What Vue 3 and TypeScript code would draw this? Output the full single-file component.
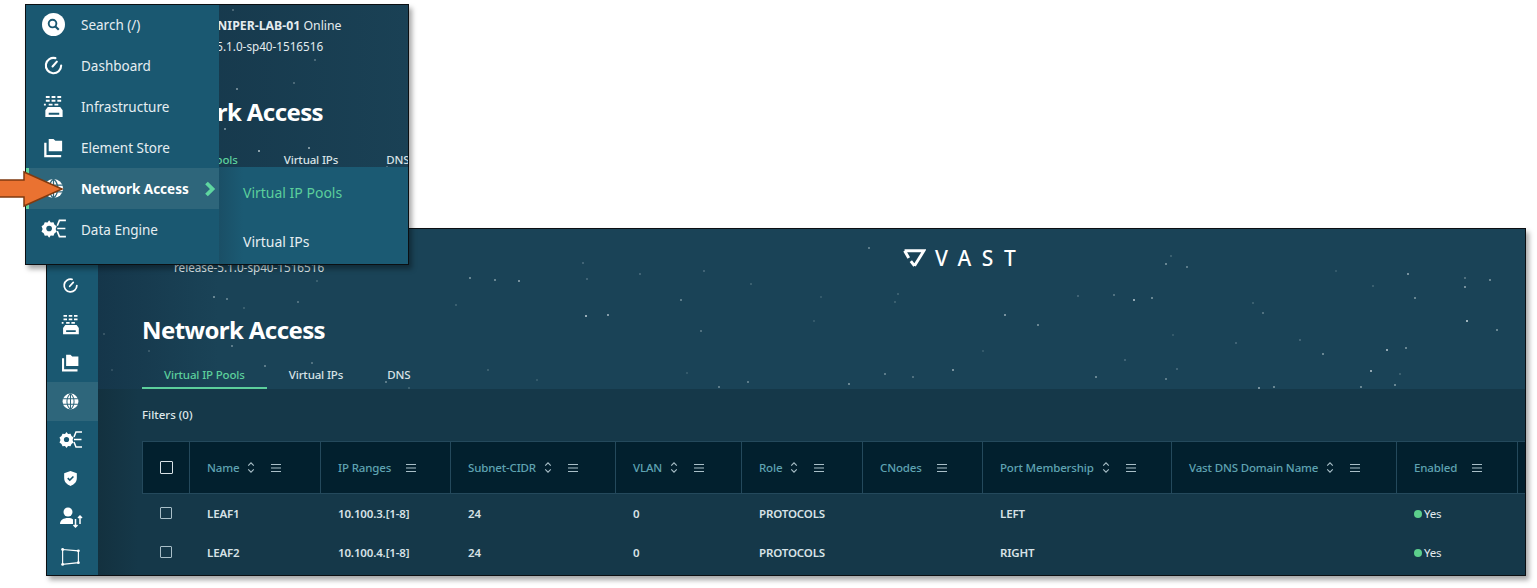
<script setup lang="ts">
interface Column {
  label: string
  width: number
  sortable: boolean
}

const columns: Column[] = [
  { label: 'Name', width: 131, sortable: true },
  { label: 'IP Ranges', width: 130, sortable: false },
  { label: 'Subnet-CIDR', width: 165, sortable: true },
  { label: 'VLAN', width: 126, sortable: true },
  { label: 'Role', width: 121, sortable: true },
  { label: 'CNodes', width: 120, sortable: false },
  { label: 'Port Membership', width: 189, sortable: true },
  { label: 'Vast DNS Domain Name', width: 225, sortable: true },
  { label: 'Enabled', width: 121, sortable: false },
]

const rows = [
  ['LEAF1', '10.100.3.[1-8]', '24', '0', 'PROTOCOLS', '', 'LEFT', ''],
  ['LEAF2', '10.100.4.[1-8]', '24', '0', 'PROTOCOLS', '', 'RIGHT', ''],
]

const gridColumns = `48px ${columns.map((c) => c.width + 'px').join(' ')} 1fr`

// star dots in the big window header: page x, page y, brightness
const pageStars = [
  [470, 278, 0.6], [495, 280, 0.6], [519, 281, 0.7], [583, 263, 0.3], [587, 279, 0.3], [640, 274, 0.3],
  [704, 271, 0.3], [751, 284, 0.25], [681, 300, 0.5], [586, 316, 0.95], [608, 315, 0.8], [701, 331, 0.4],
  [456, 305, 0.25], [488, 370, 0.25], [386, 382, 0.5], [537, 380, 0.2], [687, 373, 0.2], [719, 387, 0.5],
  [748, 382, 0.5], [849, 384, 0.6], [885, 374, 0.5], [913, 377, 0.4], [869, 248, 0.5], [821, 297, 0.2],
  [814, 321, 0.2], [898, 294, 0.25], [895, 302, 0.25], [1166, 264, 0.6], [1187, 267, 0.5], [1171, 256, 0.25],
  [1078, 296, 0.3], [1114, 295, 0.4], [1134, 300, 0.9], [1152, 298, 0.6], [1005, 315, 0.7], [1038, 325, 0.6],
  [983, 351, 0.2], [953, 370, 0.7], [1096, 377, 0.6], [1125, 360, 0.3], [1177, 369, 0.3], [1166, 379, 0.5],
  [1173, 335, 0.2], [1236, 343, 0.3], [1253, 303, 0.25], [1263, 313, 0.4], [1300, 340, 0.3], [1323, 354, 0.6],
  [1387, 350, 0.9], [1406, 348, 0.6], [1371, 371, 0.9], [1400, 374, 0.25], [1395, 385, 0.6], [1361, 387, 0.6],
  [1259, 388, 0.7], [1274, 387, 0.6], [1408, 274, 0.7], [1415, 298, 0.6], [1373, 286, 0.25], [1336, 271, 0.2],
  [1465, 278, 0.4], [1490, 280, 0.6], [1465, 287, 0.7], [1467, 321, 1], [1497, 330, 0.6], [214, 297, 0.6],
  [227, 299, 0.5], [244, 308, 0.25], [298, 302, 0.4], [317, 281, 0.25], [104, 334, 0.25], [149, 351, 0.25],
  [232, 346, 0.5], [265, 366, 0.5], [312, 363, 0.4], [409, 388, 0.25], [112, 370, 0.2],
]
const stars = pageStars.map(([x, y, o]) => ({ left: x - 99 + 'px', top: y - 230 + 'px', opacity: o * 0.8 }))

const topStars = [
  [233, 10, 0.3], [237, 89, 0.5], [294, 83, 0.3], [315, 60, 0.3], [259, 151, 0.7], [309, 148, 0.6], [225, 129, 0.5], [387, 167, 0.3],
].map(([x, y, o]) => ({ left: x - 27 + 'px', top: y - 6 + 'px', opacity: o }))
</script>

<template>
  <div class="page">
    <!-- big window -->
    <section class="window big">
      <aside class="rail">
        <div class="rail-item"></div>
        <div class="rail-item">
          <svg viewBox="0 0 24 24" class="ico"><use href="#i-dash" /></svg>
        </div>
        <div class="rail-item">
          <svg viewBox="0 0 24 24" class="ico tall"><use href="#i-infra" /></svg>
        </div>
        <div class="rail-item">
          <svg viewBox="0 0 24 24" class="ico tall"><use href="#i-store" /></svg>
        </div>
        <div class="rail-item active">
          <svg viewBox="0 0 24 24" class="ico"><use href="#i-globe" /></svg>
        </div>
        <div class="rail-item">
          <svg viewBox="0 0 24 24" class="ico wide"><use href="#i-engine" /></svg>
        </div>
        <div class="rail-item">
          <svg viewBox="0 0 24 24" class="ico"><path d="M12 2.500l8 2.800v6.200c0 5-3.500 8.300-8 10-4.500-1.700-8-5-8-10V5.300z" fill="#fff"/><path d="M8.500 11.500l2.600 2.600 4.600-4.600" fill="none" stroke="#1a5871" stroke-width="2"/></svg>
        </div>
        <div class="rail-item">
          <svg viewBox="0 0 24 24" class="ico wide"><circle cx="9" cy="7" r="4.500" fill="#fff"/><path d="M1 19c0-4 3.500-6 8-6 2 0 4 .4 5 1.500V19z" fill="#fff"/><path d="M16.500 14v8M14.500 20l2 2 2-2M21 19v-8M19 13l2-2 2 2" fill="none" stroke="#fff" stroke-width="1.500"/></svg>
        </div>
        <div class="rail-item">
          <svg viewBox="0 0 24 24" class="ico tall"><path d="M3 4l18 1.500V19L3 21z" fill="none" stroke="#fff" stroke-width="1.300"/><circle cx="3" cy="4" r="1.600" fill="#fff"/><circle cx="21" cy="5.500" r="1.600" fill="#fff"/><circle cx="21" cy="19" r="1.600" fill="#fff"/><circle cx="3" cy="21" r="1.600" fill="#fff"/></svg>
        </div>
      </aside>

      <div class="content">
        <header class="head">
          <i v-for="(s, i) in stars" :key="i" class="star" :style="s"></i>
          <div class="logo">
            <svg viewBox="0 0 22 19" class="logo-mark"><path d="M1.500 2.500H20L11 17M1.500 2.500l4 7M7.500 12.500l3.500 4.500" fill="none" stroke="#fff" stroke-width="2.800"/></svg>
            <span class="logo-text">VAST</span>
          </div>
          <div class="host">release-5.1.0-sp40-1516516</div>
          <h1 class="title">Network Access</h1>
          <nav class="tabs">
            <span class="tab on">Virtual IP Pools</span>
            <span class="tab">Virtual IPs</span>
            <span class="tab">DNS</span>
          </nav>
        </header>

        <div class="body">
          <div class="filters">Filters (0)</div>
          <div class="grid" :style="{ gridTemplateColumns: gridColumns }">
            <div class="th check"><span class="box big-box"></span></div>
            <div v-for="c in columns" :key="c.label" class="th">
              <span class="th-label">{{ c.label }}</span>
              <svg v-if="c.sortable" viewBox="0 0 10 14" class="sort"><path d="M2 5l3-3 3 3M2 9l3 3 3-3" fill="none" stroke="#a9bfc8" stroke-width="1.200"/></svg>
              <svg viewBox="0 0 12 10" class="menu"><path d="M1 1.500h10M1 5h10M1 8.500h10" stroke="#a9bfc8" stroke-width="1.100"/></svg>
            </div>
            <div class="th"></div>

            <template v-for="r in rows" :key="r[0]">
              <div class="td check"><span class="box"></span></div>
              <div v-for="(v, i) in r" :key="i" class="td">{{ v }}</div>
              <div class="td yes"><i class="dot"></i>Yes</div>
              <div class="td"></div>
            </template>
          </div>
        </div>
      </div>
    </section>

    <!-- small window with flyout -->
    <section class="window small">
      <div class="small-back">
        <i v-for="(s, i) in topStars" :key="i" class="star" :style="s"></i>
        <div class="small-host"><b>JUNIPER-LAB-01</b> Online</div>
        <div class="small-rel">release-5.1.0-sp40-1516516</div>
        <h1 class="title small-title">Network Access</h1>
        <nav class="tabs small-tabs">
          <span class="tab on">Virtual IP Pools</span>
          <span class="tab">Virtual IPs</span>
          <span class="tab">DNS</span>
        </nav>
      </div>

      <div class="flyout">
        <div class="fly-item">
          <svg viewBox="0 0 24 24" class="fly-ico"><circle cx="12" cy="12" r="12" fill="#fff"/><circle cx="11" cy="11" r="4" fill="none" stroke="#1a5871" stroke-width="2"/><path d="M14 14l3.500 3.500" stroke="#1a5871" stroke-width="2.200"/></svg>
          <span>Search (/)</span>
        </div>
        <div class="fly-item">
          <svg viewBox="0 0 24 24" class="fly-ico"><use href="#i-dash" /></svg>
          <span>Dashboard</span>
        </div>
        <div class="fly-item">
          <svg viewBox="0 0 24 24" class="fly-ico"><use href="#i-infra" /></svg>
          <span>Infrastructure</span>
        </div>
        <div class="fly-item">
          <svg viewBox="0 0 24 24" class="fly-ico"><use href="#i-store" /></svg>
          <span>Element Store</span>
        </div>
        <div class="fly-item current">
          <svg viewBox="0 0 24 24" class="fly-ico"><use href="#i-globe" /></svg>
          <span>Network Access</span>
          <svg viewBox="0 0 12 16" class="chev"><path d="M2.500 2l6 6-6 6" fill="none" stroke="#5fd6a0" stroke-width="3.800"/></svg>
        </div>
        <div class="fly-item">
          <svg viewBox="0 0 24 24" class="fly-ico wide"><use href="#i-engine" /></svg>
          <span>Data Engine</span>
        </div>
      </div>

      <div class="submenu">
        <div class="sub-item on">Virtual IP Pools</div>
        <div class="sub-item">Virtual IPs</div>
      </div>
    </section>

    <svg class="arrow" viewBox="0 0 64 38" width="64" height="38">
      <path d="M-2 10H24V2L62 19 24 36V27H-2z" fill="#ea7231" stroke="#7f3a10" stroke-width="1.500"/>
    </svg>

    <svg width="0" height="0" class="defs">
      <defs>
        <g id="i-dash">
          <path d="M20 12a8 8 0 1 1-6-7.700" fill="none" stroke="#fff" stroke-width="2.200" stroke-linecap="round"/>
          <path d="M11 13l4.500-5" stroke="#fff" stroke-width="2.200" stroke-linecap="round"/>
        </g>
        <g id="i-infra" fill="#fff">
          <path d="M4 1h4v2H4zM10 1h4v2h-4zM16 1h4v2h-4zM4 5h4v2H4zM10 5h4v2h-4zM16 5h4v2h-4zM2 9h2v2H2zM7 9h4v2H7zM13 9h4v2h-4z"/>
          <path d="M6 12.500h13l2.500 3.500v7H3.500v-7zM7 18.500v2h11v-2z" fill-rule="evenodd"/>
        </g>
        <g id="i-store">
          <path d="M7 3h5l2 2h7v11H7z" fill="#fff"/>
          <path d="M3.500 7v14H20" fill="none" stroke="#fff" stroke-width="2.400"/>
        </g>
        <g id="i-globe">
          <circle cx="12" cy="12" r="10" fill="#fff"/>
          <path d="M2 8.500h20M2 15.500h20M12 2v20M12 2c-6 5-6 15 0 20M12 2c6 5 6 15 0 20" fill="none" stroke="#2e667b" stroke-width="1.300"/>
        </g>
        <g id="i-engine">
          <path d="M8.500 5l1.500 2 2.500-.3 1 2.400 2 1.400-1 2.500 1 2.500-2 1.400-1 2.400-2.500-.3-1.500 2-1.500-2-2.500.3-1-2.400-2-1.400 1-2.500-1-2.500 2-1.400 1-2.400 2.500.3z" fill="#fff" transform="translate(-1 -1)"/>
          <circle cx="7.500" cy="11.500" r="2.600" fill="#1a5871"/>
          <path d="M15 11.500h7.500M15 9l2-5h6M15 14l2 5h6" fill="none" stroke="#fff" stroke-width="1.500"/>
        </g>
      </defs>
    </svg>
  </div>
</template>

<style>
html,
body {
  margin: 0;
  background: #fff;
}
</style>

<style scoped>
.page {
  position: relative;
  width: 1537px;
  height: 588px;
  overflow: hidden;
  background: #fff;
  font-family: 'Noto Sans', 'Open Sans', sans-serif;
  color: #e4ecef;
}

.defs {
  position: absolute;
}

.window {
  position: absolute;
  box-sizing: border-box;
  border: 1.500px solid #0b0f12;
  box-shadow: 3px 4px 5px rgba(0, 0, 0, 0.35);
  overflow: hidden;
}

.big {
  left: 46px;
  top: 228px;
  width: 1480px;
  height: 348px;
  display: flex;
  background: #163a4c;
}

.small {
  left: 25px;
  top: 4px;
  width: 384px;
  height: 261px;
  background: linear-gradient(90deg, #143346, #1a4155);
}

.rail {
  width: 51px;
  flex: none;
  background: #1a5871;
  display: flex;
  flex-direction: column;
}

.rail-item {
  height: 38.700px;
  flex: none;
  display: flex;
  align-items: center;
  justify-content: center;
  padding-right: 4px;
}

.rail-item:first-child {
  height: 37px;
}

.rail-item.active {
  background: #2e667b;
}

.ico {
  width: 19px;
  height: 19px;
}

.ico.tall {
  width: 21px;
  height: 21px;
}

.ico.wide {
  width: 24px;
  height: 24px;
}

.content {
  flex: 1;
  min-width: 0;
  display: flex;
  flex-direction: column;
  background: linear-gradient(90deg, #13313f 0, #153849 40px);
}

.head {
  position: relative;
  height: 160px;
  flex: none;
  box-sizing: border-box;
  background: linear-gradient(90deg, #15364a, #1a4357 120px);
}

.star {
  position: absolute;
  width: 1.600px;
  height: 1.600px;
  border-radius: 50%;
  background: #e2ecef;
}

.logo {
  position: absolute;
  left: 805px;
  top: 19px;
  display: flex;
  align-items: center;
  gap: 9px;
}

.logo-mark {
  width: 23px;
  height: 20px;
}

.logo-text {
  font-size: 21px;
  font-weight: 500;
  letter-spacing: 10.500px;
  color: #fff;
  line-height: 20px;
}

.host {
  position: absolute;
  left: 76px;
  top: 30px;
  font-size: 11.700px;
  line-height: 16px;
  color: #dfe8eb;
}

.title {
  margin: 0;
  font-size: 24px;
  line-height: 32px;
  font-weight: 700;
  letter-spacing: -0.600px;
  color: #fff;
}

.head .title {
  position: absolute;
  left: 44px;
  top: 85px;
}

.tabs {
  display: flex;
  font-size: 11.500px;
  font-weight: 500;
  letter-spacing: -0.150px;
}

.head .tabs {
  position: absolute;
  left: 44px;
  top: 130px;
}

.tab {
  height: 30px;
  box-sizing: border-box;
  line-height: 32px;
  padding: 0 22px;
  color: #d8e2e6;
  white-space: nowrap;
}

.tab.on {
  color: #5ccf9c;
  border-bottom: 2px solid #5ccf9c;
}

.body {
  flex: 1;
  padding: 17px 0 0 44px;
  min-height: 0;
}

.filters {
  font-size: 11.500px;
  font-weight: 500;
  line-height: 18px;
  color: #dfe8eb;
  margin-bottom: 17px;
}

.grid {
  display: grid;
  grid-auto-rows: 39px;
  grid-template-rows: 52px;
  border-top: 1px solid #24495c;
  margin-right: -1px;
}

.th {
  display: flex;
  align-items: center;
  gap: 7px;
  padding-left: 17px;
  background: #02202e;
  border-right: 1px solid #24495c;
  border-bottom: 1px solid #24495c;
  font-size: 11.500px;
  font-weight: 500;
  letter-spacing: -0.150px;
  color: #5fa3b2;
  box-sizing: border-box;
}

.th-label {
  white-space: nowrap;
}

.sort {
  width: 10px;
  height: 13px;
  flex: none;
}

.menu {
  width: 12px;
  height: 10px;
  margin-left: 7px;
  flex: none;
}

.th.check {
  justify-content: center;
  padding: 0;
}

.th:first-child {
  border-left: 1px solid #24495c;
}

.td {
  display: flex;
  align-items: center;
  padding-left: 17px;
  font-size: 11.500px;
  font-weight: 600;
  letter-spacing: -0.150px;
  color: #d8e2e6;
  white-space: nowrap;
}

.td.check {
  justify-content: center;
  padding: 0;
}

.box {
  display: block;
  width: 10px;
  height: 10px;
  border: 1px solid #a9bfc8;
  border-radius: 1px;
  margin-top: -2px;
}

.big-box {
  margin-top: 0;
  width: 11px;
  height: 11px;
  border-color: #d8e2e6;
}

.yes {
  font-weight: 400;
  color: #e4ecef;
  gap: 2px;
}

.dot {
  width: 8px;
  height: 8px;
  border-radius: 50%;
  background: #5ccf8c;
}

.small-back {
  position: relative;
  height: 100%;
}

.small-host {
  position: absolute;
  left: 178px;
  top: 13px;
  font-size: 12.300px;
  line-height: 16px;
  white-space: nowrap;
}

.small-rel {
  position: absolute;
  left: 147px;
  top: 33px;
  font-size: 11.700px;
  line-height: 16px;
  white-space: nowrap;
}

.small-title {
  position: absolute;
  left: 114px;
  top: 91px;
}

.small-tabs {
  position: absolute;
  left: 108px;
  top: 139px;
}

.small-tabs .tab {
  padding: 0 23px;
}

.small-tabs .tab:last-child {
  margin-left: 2px;
}

.flyout {
  position: absolute;
  left: 0;
  top: -1px;
  bottom: 0;
  width: 193px;
  background: #1a5871;
}

.fly-item {
  height: 41px;
  display: flex;
  align-items: center;
  padding-left: 55px;
  position: relative;
  font-size: 13.500px;
  color: #e6eef1;
  white-space: nowrap;
}

.fly-item.current {
  background: #2e667b;
  font-weight: 700;
  color: #fff;
}

.fly-item.current::before {
  content: '';
  position: absolute;
  left: 0;
  top: 0;
  bottom: 0;
  width: 3px;
  background: #5fd6a0;
}

.fly-ico {
  position: absolute;
  left: 16px;
  top: 9px;
  width: 23px;
  height: 23px;
}

.fly-ico.wide {
  left: 15px;
  width: 26px;
  height: 26px;
  top: 7px;
}

.chev {
  position: absolute;
  left: 178px;
  top: 13px;
  width: 12px;
  height: 16px;
}

.submenu {
  position: absolute;
  left: 193px;
  right: 0;
  top: 162px;
  bottom: 0;
  padding-top: 1px;
  padding-left: 24px;
  background: linear-gradient(90deg, #1a4f66, #1b5a73 24px);
}

.sub-item {
  height: 49px;
  display: flex;
  align-items: center;
  font-size: 14px;
  color: #e6eef1;
}

.sub-item.on {
  color: #5ccf9c;
}

.arrow {
  position: absolute;
  left: 0;
  top: 170px;
  overflow: visible;
}
</style>
